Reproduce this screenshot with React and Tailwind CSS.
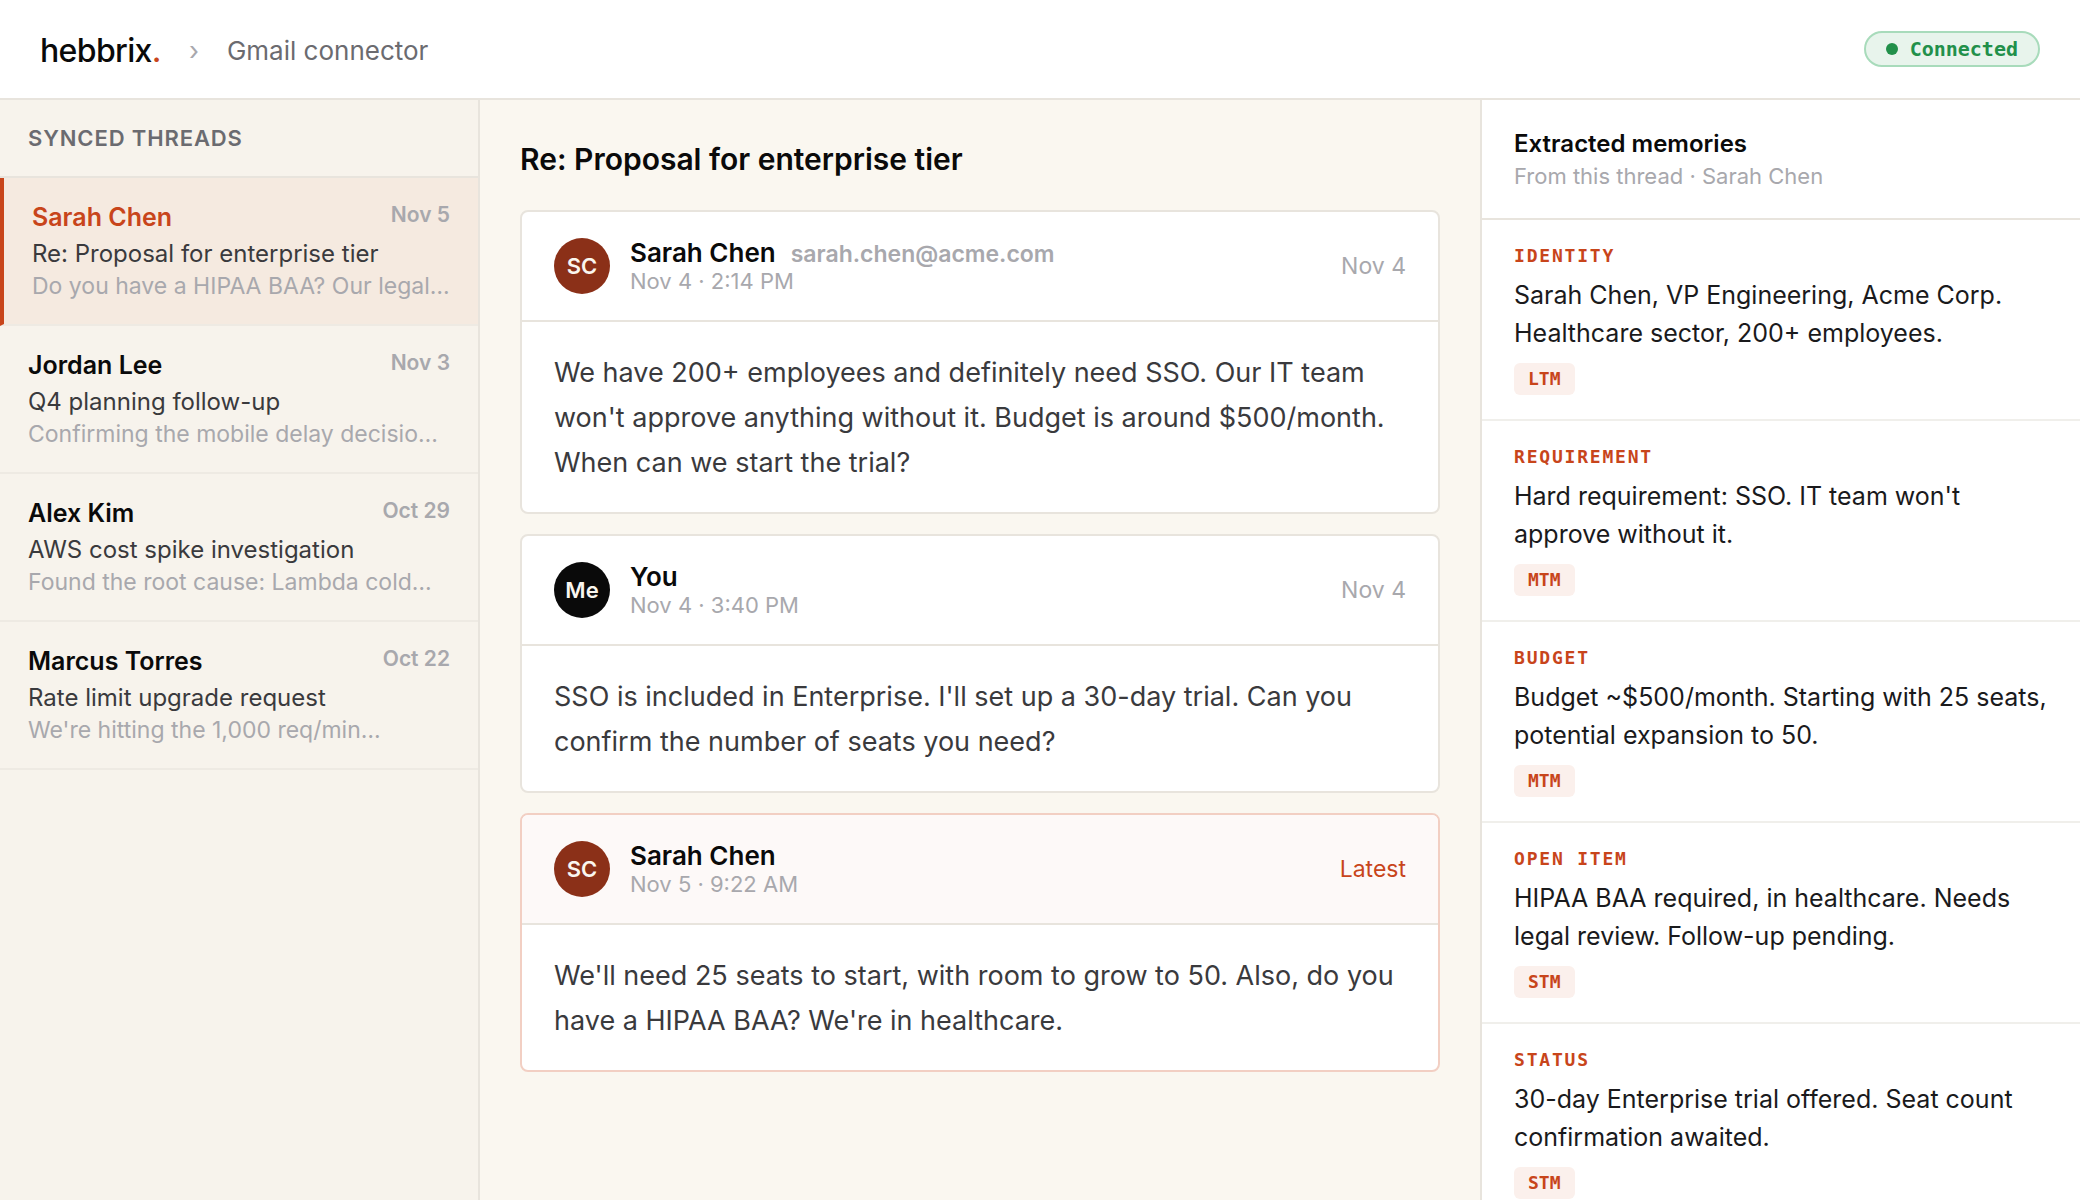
import React from 'react';

const threads = [
  { id: 1, name: 'Sarah Chen', date: 'Nov 5', subject: 'Re: Proposal for enterprise tier', preview: 'Do you have a HIPAA BAA? Our legal…' },
  { id: 2, name: 'Jordan Lee', date: 'Nov 3', subject: 'Q4 planning follow-up', preview: 'Confirming the mobile delay decisio…' },
  { id: 3, name: 'Alex Kim', date: 'Oct 29', subject: 'AWS cost spike investigation', preview: 'Found the root cause: Lambda cold…' },
  { id: 4, name: 'Marcus Torres', date: 'Oct 22', subject: 'Rate limit upgrade request', preview: "We're hitting the 1,000 req/min…" },
];

const messages = [
  {
    id: 1,
    initials: 'SC',
    name: 'Sarah Chen',
    email: 'sarah.chen@acme.com',
    time: 'Nov 4 · 2:14 PM',
    label: 'Nov 4',
    body: "We have 200+ employees and definitely need SSO. Our IT team won't approve anything without it. Budget is around $500/month. When can we start the trial?",
  },
  {
    id: 2,
    initials: 'Me',
    name: 'You',
    time: 'Nov 4 · 3:40 PM',
    label: 'Nov 4',
    body: "SSO is included in Enterprise. I'll set up a 30-day trial. Can you confirm the number of seats you need?",
  },
  {
    id: 3,
    initials: 'SC',
    name: 'Sarah Chen',
    time: 'Nov 5 · 9:22 AM',
    label: 'Latest',
    latest: true,
    body: "We'll need 25 seats to start, with room to grow to 50. Also, do you have a HIPAA BAA? We're in healthcare.",
  },
];

const memories = [
  { type: 'IDENTITY', text: 'Sarah Chen, VP Engineering, Acme Corp. Healthcare sector, 200+ employees.', tier: 'LTM' },
  { type: 'REQUIREMENT', text: "Hard requirement: SSO. IT team won't approve without it.", tier: 'MTM' },
  { type: 'BUDGET', text: 'Budget ~$500/month. Starting with 25 seats, potential expansion to 50.', tier: 'MTM' },
  { type: 'OPEN ITEM', text: 'HIPAA BAA required, in healthcare. Needs legal review. Follow-up pending.', tier: 'STM' },
  { type: 'STATUS', text: '30-day Enterprise trial offered. Seat count confirmation awaited.', tier: 'STM' },
];

const Header = () => (
  <header className="flex shrink-0 items-center justify-between border-b-2 border-[#e8e4dd] bg-white px-10 py-[26px]">
    <div className="flex items-center gap-7 pt-1">
      <a href="#" className="text-[32px] leading-[42px] font-medium tracking-[-0.02em] text-[#0a0a0a]">
        hebbrix<span className="text-[#c8451b]">.</span>
      </a>
      <span className="text-[26px] leading-8 text-[#a8a8ad]">›</span>
      <span className="text-[26px] leading-8 text-[#6b6b70]">Gmail connector</span>
    </div>
    <div className="flex items-center gap-3 rounded-full border-2 border-[#a8dbbb] bg-[#e8f4ec] px-5 font-['DejaVu_Sans_Mono',monospace] text-[20px] leading-8 font-bold text-[#22904a]">
      <span className="size-3 rounded-full bg-[#22904a]" />
      Connected
    </div>
  </header>
);

const ThreadItem = ({ thread, active, onSelect }) => (
  <li>
    <button
      type="button"
      onClick={() => onSelect(thread.id)}
      className={`block w-full border-b-2 border-b-[#eeeae3] pt-6 pr-7 pb-[22px] text-left ${
        active ? 'border-l-4 border-l-[#c8451b] bg-[#f5eae0] pl-7' : 'pl-7'
      }`}
    >
      <span className="flex items-start justify-between">
        <span className={`text-[25px] leading-[30px] font-semibold ${active ? 'text-[#c8451b]' : 'text-[#0a0a0a]'}`}>
          {thread.name}
        </span>
        <span className="text-[21px] leading-[26px] font-semibold text-[#a8a8ad]">{thread.date}</span>
      </span>
      <span className="mt-1.5 block truncate text-[24px] leading-8 text-[#3a3a3d]">{thread.subject}</span>
      <span className="block truncate text-[23px] leading-8 text-[#a8a8ad]">{thread.preview}</span>
    </button>
  </li>
);

const MessageCard = ({ message }) => (
  <article className={`overflow-hidden rounded-lg border-2 bg-white ${message.latest ? 'border-[#f2cfc3]' : 'border-[#e8e4dd]'}`}>
    <div className={`flex items-center gap-5 border-b-2 border-[#e8e4dd] px-8 py-[26px] ${message.latest ? 'bg-[#fdf9f8]' : ''}`}>
      <div
        className={`flex size-14 shrink-0 items-center justify-center rounded-full text-[22px] font-semibold text-[#faf6ef] ${
          message.initials === 'Me' ? 'bg-[#0a0a0a]' : 'bg-[#8b3018]'
        }`}
      >
        {message.initials}
      </div>
      <div className="min-w-0 flex-1">
        <p className="flex items-baseline gap-[15px] text-[26px] leading-[30px] font-semibold text-[#0a0a0a]">
          {message.name}
          {message.email && <span className="text-[23px] leading-6 text-[#a8a8ad]">{message.email}</span>}
        </p>
        <p className="text-[22px] leading-[26px] text-[#a8a8ad]">{message.time}</p>
      </div>
      <span className={`text-[23px] leading-8 ${message.latest ? 'text-[#c8451b]' : 'text-[#a8a8ad]'}`}>{message.label}</span>
    </div>
    <p className="px-8 pt-7 pb-[27px] text-[27px] leading-[45px] text-[#3a3a3d]">{message.body}</p>
  </article>
);

const MemoryItem = ({ memory }) => (
  <li className="border-b-2 border-[#f0efeb] px-8 py-6">
    <h3 className="font-['DejaVu_Sans_Mono',monospace] text-[18px] leading-6 font-bold tracking-[0.1em] text-[#c8451b]">{memory.type}</h3>
    <p className="mt-2 text-[25px] leading-[38px] text-[#1a1a1c]">{memory.text}</p>
    <span className="mt-[11px] block w-fit rounded-md bg-[#fbf0ec] px-[14px] font-['DejaVu_Sans_Mono',monospace] text-[18px] leading-8 font-bold text-[#c8451b]">
      {memory.tier}
    </span>
  </li>
);

const App = () => {
  const [selected, setSelected] = React.useState(1);

  return (
    <div className="flex h-screen flex-col bg-[#faf7f0] font-[Inter,sans-serif]">
      <Header />
      <div className="grid min-h-0 flex-1 grid-cols-[480px_minmax(0,1fr)_600px]">
        {/* Threads */}
        <aside className="overflow-hidden border-r-2 border-[#e8e4dd] bg-[#f7f3ec]">
          <h2 className="border-b-2 border-[#e8e4dd] px-7 py-6 text-[22px] leading-7 font-semibold tracking-[0.04em] text-[#6b6b70]">
            SYNCED THREADS
          </h2>
          <ul>
            {threads.map((thread) => (
              <ThreadItem key={thread.id} thread={thread} active={thread.id === selected} onSelect={setSelected} />
            ))}
          </ul>
        </aside>

        {/* Conversation */}
        <main className="overflow-hidden p-10">
          <h1 className="text-[30px] leading-[38px] font-semibold text-[#0a0a0a]">Re: Proposal for enterprise tier</h1>
          <div className="mt-8 flex flex-col gap-5">
            {messages.map((message) => (
              <MessageCard key={message.id} message={message} />
            ))}
          </div>
        </main>

        {/* Memories */}
        <aside className="overflow-hidden border-l-2 border-[#e8e4dd] bg-white">
          <div className="border-b-2 border-[#e8e4dd] px-8 pt-7 pb-[26px]">
            <h2 className="text-[24px] leading-8 font-semibold text-[#0a0a0a]">Extracted memories</h2>
            <p className="text-[22px] leading-8 text-[#a8a8ad]">From this thread · Sarah Chen</p>
          </div>
          <ul>
            {memories.map((memory) => (
              <MemoryItem key={memory.type} memory={memory} />
            ))}
          </ul>
        </aside>
      </div>
    </div>
  );
};

export default App;
